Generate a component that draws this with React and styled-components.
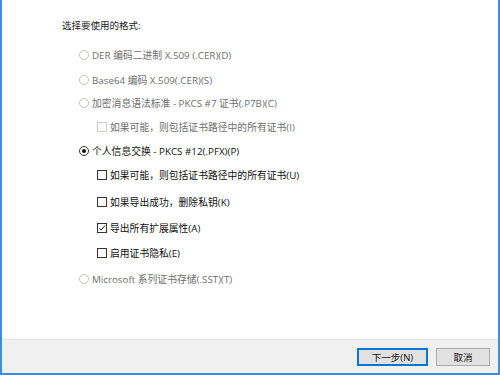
import React from 'react';
import styled, { createGlobalStyle } from 'styled-components';

const Global = createGlobalStyle`
  html, body {
    margin: 0;
    padding: 0;
    background: #ffffff;
  }
  body {
    font-family: "Open Sans", "Noto Sans CJK SC", sans-serif;
  }
`;

export const Window = styled.div`
  width: 500px;
  height: 375px;
  box-sizing: border-box;
  border: 2px solid #3b8ee0;
  border-top: none;
  background: #ffffff;
  display: flex;
  flex-direction: column;
`;

export const Content = styled.div`
  flex: 1;
  padding: 19px 0 0 60px;
`;

export const Heading = styled.div`
  font-size: 9.5px;
  line-height: 14px;
  color: #1a1a1a;
  margin-bottom: 9px;
`;

export const List = styled.div`
  display: flex;
  flex-direction: column;
  padding-left: 17px;
`;

export const Row = styled.label`
  display: flex;
  align-items: center;
  height: ${(p) => p.$h || 26}px;
  margin-left: ${(p) => (p.$sub ? 18 : 0)}px;
  font-size: 9.8px;
  color: ${(p) => (p.$disabled ? '#6e6e6e' : '#111111')};
`;

export const Radio = styled.span`
  width: 10px;
  height: 10px;
  box-sizing: border-box;
  border-radius: 50%;
  border: 1px solid ${(p) => (p.$disabled ? '#c4c4c4' : '#333333')};
  margin-right: 3px;
  display: flex;
  align-items: center;
  justify-content: center;
  &::after {
    content: '';
    width: 4px;
    height: 4px;
    border-radius: 50%;
    background: #111111;
    display: ${(p) => (p.$checked ? 'block' : 'none')};
  }
`;

export const Box = styled.span`
  width: 10px;
  height: 10px;
  box-sizing: border-box;
  border: 1px solid ${(p) => (p.$disabled ? '#cccccc' : '#333333')};
  margin-right: 3px;
  display: flex;
  align-items: center;
  justify-content: center;
`;

export const Footer = styled.div`
  height: 33px;
  background: #f0f0f0;
  border-top: 1px solid #e2e2e2;
  display: flex;
  align-items: center;
  justify-content: flex-end;
  gap: 8px;
  padding-right: 8px;
`;

export const Button = styled.button`
  height: 18px;
  width: ${(p) => p.$w}px;
  padding: 0;
  box-sizing: border-box;
  font-family: inherit;
  font-size: 9.5px;
  color: #111111;
  background: #e1e1e1;
  border: 1px solid ${(p) => (p.$primary ? '#0078d7' : '#adadad')};
  box-shadow: ${(p) => (p.$primary ? 'inset 0 0 0 1px #0078d7' : 'none')};
`;

const Check = () => (
  <svg width="8" height="8" viewBox="0 0 8 8">
    <path d="M1 4.2 L3 6.2 L7 1.5" fill="none" stroke="#222" strokeWidth="1" />
  </svg>
);

const RadioItem = ({ label, disabled, checked, h }) => (
  <Row $disabled={disabled} $h={h}>
    <Radio $disabled={disabled} $checked={checked} />
    {label}
  </Row>
);

const CheckItem = ({ label, disabled, checked, h }) => (
  <Row $sub $disabled={disabled} $h={h}>
    <Box $disabled={disabled}>{checked && <Check />}</Box>
    {label}
  </Row>
);

const App = () => {
  return (
    <Window>
      <Global />
      <Content>
        <Heading>选择要使用的格式:</Heading>
        <List>
          <RadioItem disabled label="DER 编码二进制 X.509 (.CER)(D)" />
          <RadioItem disabled label="Base64 编码 X.509(.CER)(S)" h={24} />
          <RadioItem disabled label="加密消息语法标准 - PKCS #7 证书(.P7B)(C)" h={22} />
          <CheckItem disabled label="如果可能，则包括证书路径中的所有证书(I)" h={26} />
          <RadioItem checked label="个人信息交换 - PKCS #12(.PFX)(P)" h={22} />
          <CheckItem label="如果可能，则包括证书路径中的所有证书(U)" />
          <CheckItem label="如果导出成功，删除私钥(K)" h={27} />
          <CheckItem checked label="导出所有扩展属性(A)" h={25} />
          <CheckItem label="启用证书隐私(E)" />
          <RadioItem disabled label="Microsoft 系列证书存储(.SST)(T)" />
        </List>
      </Content>
      <Footer>
        <Button $primary $w={71}>下一步(N)</Button>
        <Button $w={54}>取消</Button>
      </Footer>
    </Window>
  );
};

export default App;
